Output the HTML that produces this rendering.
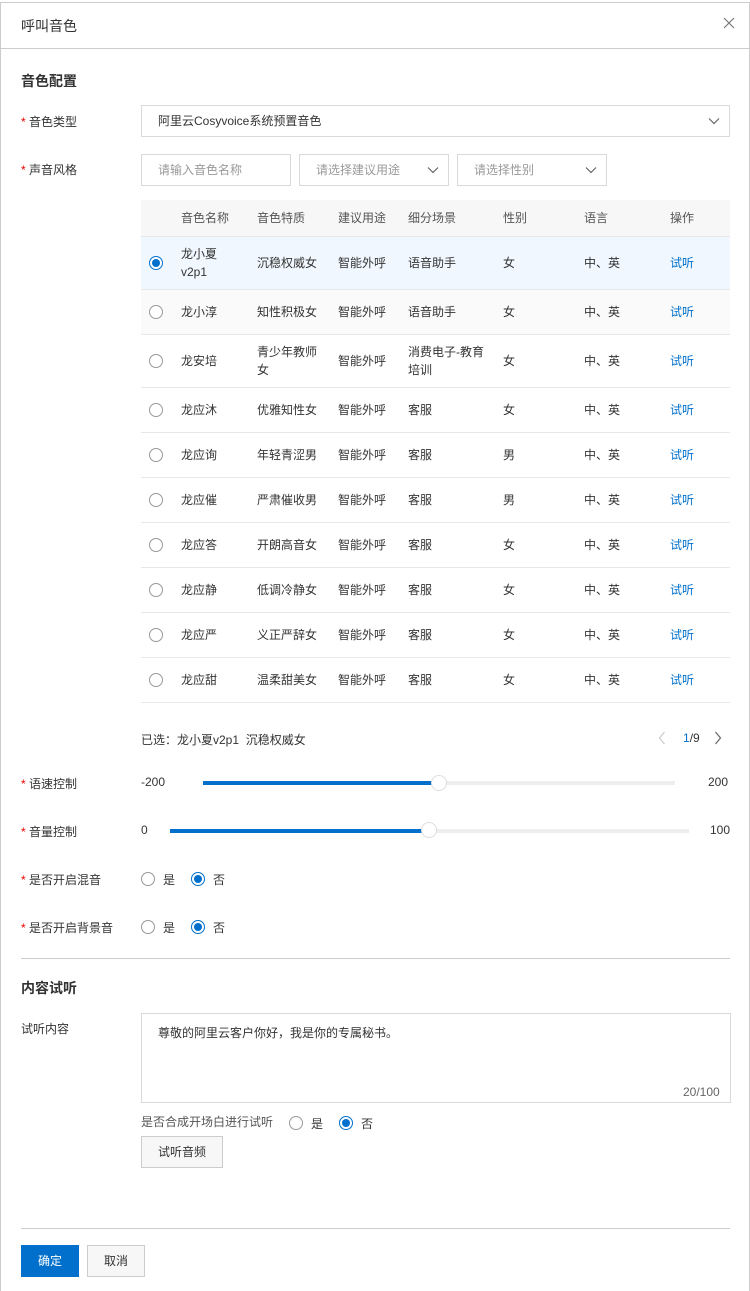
<!DOCTYPE html><html><head><meta charset="utf-8"><style>
*{box-sizing:border-box;margin:0;padding:0}
body{width:750px;height:1291px;background:#fff;font-family:"Liberation Sans","Noto Sans CJK SC",sans-serif;font-size:12px;color:#333;position:relative;overflow:hidden}
.a{position:absolute}
.frame{left:0;top:2px;width:750px;height:1289px;border:1px solid #ccc;border-bottom:none}
.star{color:#e00}
.inp{position:absolute;border:1px solid #d9d9d9;background:#fff;height:32px;line-height:30px;padding-left:16px;color:#333}
.ph{color:#999}
.chev{position:absolute;right:9px;top:9px}
.row{position:absolute;left:141px;width:589px;border-bottom:1px solid #e8e8e8}
.c{position:absolute;top:50%;transform:translateY(-50%);line-height:18px}
.rad{position:absolute;width:14px;height:14px;border:1px solid #999;border-radius:50%;background:#fff}
.rad.on{border-color:#0070cc}
.rad.on::after{content:"";position:absolute;left:2px;top:2px;width:8px;height:8px;border-radius:50%;background:#0070cc}
.link{color:#0070cc}
.hr{position:absolute;height:1px;background:#ccc}
.btn{position:absolute;height:32px;line-height:30px;text-align:center;border:1px solid #ccc;background:#f7f7f7}
</style></head><body>
<div class="a frame"></div>
<div class="a" style="left:21px;top:16px;font-size:14px;color:#333">呼叫音色</div>
<svg class="a" style="left:723px;top:17px" width="12" height="12" viewBox="0 0 12 12"><path d="M1 1L11 11M11 1L1 11" stroke="#777" stroke-width="1.2"/></svg>
<div class="hr" style="left:1px;width:748px;top:48px"></div>
<div class="a" style="left:21px;top:71px;font-size:14px;font-weight:bold">音色配置</div>
<div class="a" style="left:21px;top:113px"><span class="star">* </span>音色类型</div>
<div class="inp" style="left:141px;top:105px;width:589px">阿里云Cosyvoice系统预置音色<svg class="chev" width="12" height="12" viewBox="0 0 12 12"><path d="M1 3.5L6 8.5L11 3.5" fill="none" stroke="#666" stroke-width="1.2"/></svg></div>
<div class="a" style="left:21px;top:161px"><span class="star">* </span>声音风格</div>
<div class="inp ph" style="left:141px;top:154px;width:150px">请输入音色名称</div>
<div class="inp ph" style="left:299px;top:154px;width:150px">请选择建议用途<svg class="chev" width="12" height="12" viewBox="0 0 12 12"><path d="M1 3.5L6 8.5L11 3.5" fill="none" stroke="#666" stroke-width="1.2"/></svg></div>
<div class="inp ph" style="left:457px;top:154px;width:150px">请选择性别<svg class="chev" width="12" height="12" viewBox="0 0 12 12"><path d="M1 3.5L6 8.5L11 3.5" fill="none" stroke="#666" stroke-width="1.2"/></svg></div>

<div class="row" style="top:200px;height:37px;background:#f7f7f7;color:#555">
<span class="c" style="left:40px">音色名称</span><span class="c" style="left:116px">音色特质</span><span class="c" style="left:197px">建议用途</span><span class="c" style="left:267px">细分场景</span><span class="c" style="left:362px">性别</span><span class="c" style="left:443px">语言</span><span class="c" style="left:529px">操作</span></div>

<div class="row" style="top:237px;height:53px;background:#f0f7fe"><span class="rad on c" style="left:8px"></span><span class="c" style="left:40px">龙小夏<br>v2p1</span><span class="c" style="left:116px">沉稳权威女</span><span class="c" style="left:197px">智能外呼</span><span class="c" style="left:267px">语音助手</span><span class="c" style="left:362px">女</span><span class="c" style="left:443px">中、英</span><span class="c link" style="left:529px">试听</span></div>
<div class="row" style="top:290px;height:45px;background:#fafafa"><span class="rad c" style="left:8px"></span><span class="c" style="left:40px">龙小淳</span><span class="c" style="left:116px">知性积极女</span><span class="c" style="left:197px">智能外呼</span><span class="c" style="left:267px">语音助手</span><span class="c" style="left:362px">女</span><span class="c" style="left:443px">中、英</span><span class="c link" style="left:529px">试听</span></div>
<div class="row" style="top:335px;height:53px"><span class="rad c" style="left:8px"></span><span class="c" style="left:40px">龙安培</span><span class="c" style="left:116px">青少年教师<br>女</span><span class="c" style="left:197px">智能外呼</span><span class="c" style="left:267px">消费电子-教育<br>培训</span><span class="c" style="left:362px">女</span><span class="c" style="left:443px">中、英</span><span class="c link" style="left:529px">试听</span></div>
<div class="row" style="top:388px;height:45px"><span class="rad c" style="left:8px"></span><span class="c" style="left:40px">龙应沐</span><span class="c" style="left:116px">优雅知性女</span><span class="c" style="left:197px">智能外呼</span><span class="c" style="left:267px">客服</span><span class="c" style="left:362px">女</span><span class="c" style="left:443px">中、英</span><span class="c link" style="left:529px">试听</span></div>
<div class="row" style="top:433px;height:45px"><span class="rad c" style="left:8px"></span><span class="c" style="left:40px">龙应询</span><span class="c" style="left:116px">年轻青涩男</span><span class="c" style="left:197px">智能外呼</span><span class="c" style="left:267px">客服</span><span class="c" style="left:362px">男</span><span class="c" style="left:443px">中、英</span><span class="c link" style="left:529px">试听</span></div>
<div class="row" style="top:478px;height:45px"><span class="rad c" style="left:8px"></span><span class="c" style="left:40px">龙应催</span><span class="c" style="left:116px">严肃催收男</span><span class="c" style="left:197px">智能外呼</span><span class="c" style="left:267px">客服</span><span class="c" style="left:362px">男</span><span class="c" style="left:443px">中、英</span><span class="c link" style="left:529px">试听</span></div>
<div class="row" style="top:523px;height:45px"><span class="rad c" style="left:8px"></span><span class="c" style="left:40px">龙应答</span><span class="c" style="left:116px">开朗高音女</span><span class="c" style="left:197px">智能外呼</span><span class="c" style="left:267px">客服</span><span class="c" style="left:362px">女</span><span class="c" style="left:443px">中、英</span><span class="c link" style="left:529px">试听</span></div>
<div class="row" style="top:568px;height:45px"><span class="rad c" style="left:8px"></span><span class="c" style="left:40px">龙应静</span><span class="c" style="left:116px">低调冷静女</span><span class="c" style="left:197px">智能外呼</span><span class="c" style="left:267px">客服</span><span class="c" style="left:362px">女</span><span class="c" style="left:443px">中、英</span><span class="c link" style="left:529px">试听</span></div>
<div class="row" style="top:613px;height:45px"><span class="rad c" style="left:8px"></span><span class="c" style="left:40px">龙应严</span><span class="c" style="left:116px">义正严辞女</span><span class="c" style="left:197px">智能外呼</span><span class="c" style="left:267px">客服</span><span class="c" style="left:362px">女</span><span class="c" style="left:443px">中、英</span><span class="c link" style="left:529px">试听</span></div>
<div class="row" style="top:658px;height:45px"><span class="rad c" style="left:8px"></span><span class="c" style="left:40px">龙应甜</span><span class="c" style="left:116px">温柔甜美女</span><span class="c" style="left:197px">智能外呼</span><span class="c" style="left:267px">客服</span><span class="c" style="left:362px">女</span><span class="c" style="left:443px">中、英</span><span class="c link" style="left:529px">试听</span></div>

<div class="a" style="left:141px;top:731px">已选：龙小夏v2p1&nbsp; 沉稳权威女</div>
<svg class="a" style="left:658px;top:731px" width="8" height="14" viewBox="0 0 8 14"><path d="M6.5 1L1.5 7L6.5 13" fill="none" stroke="#ccc" stroke-width="1.2"/></svg>
<div class="a" style="left:683px;top:731px"><span class="link">1</span>/9</div>
<svg class="a" style="left:714px;top:731px" width="8" height="14" viewBox="0 0 8 14"><path d="M1.5 1L6.5 7L1.5 13" fill="none" stroke="#666" stroke-width="1.2"/></svg>

<div class="a" style="left:21px;top:775px"><span class="star">* </span>语速控制</div>
<div class="a" style="left:141px;top:775px">-200</div>
<div class="a" style="left:203px;top:781px;width:472px;height:4px;background:#eee"></div>
<div class="a" style="left:203px;top:781px;width:236px;height:4px;background:#0070cc"></div>
<div class="a" style="left:431px;top:775px;width:16px;height:16px;border-radius:50%;background:#fff;border:1px solid #ddd"></div>
<div class="a" style="left:708px;top:775px">200</div>

<div class="a" style="left:21px;top:823px"><span class="star">* </span>音量控制</div>
<div class="a" style="left:141px;top:823px">0</div>
<div class="a" style="left:170px;top:829px;width:519px;height:4px;background:#eee"></div>
<div class="a" style="left:170px;top:829px;width:259px;height:4px;background:#0070cc"></div>
<div class="a" style="left:421px;top:822px;width:16px;height:16px;border-radius:50%;background:#fff;border:1px solid #ddd"></div>
<div class="a" style="left:710px;top:823px">100</div>

<div class="a" style="left:21px;top:871px"><span class="star">* </span>是否开启混音</div>
<span class="rad" style="left:141px;top:872px"></span><div class="a" style="left:163px;top:871px">是</div>
<span class="rad on" style="left:191px;top:872px"></span><div class="a" style="left:213px;top:871px">否</div>
<div class="a" style="left:21px;top:919px"><span class="star">* </span>是否开启背景音</div>
<span class="rad" style="left:141px;top:920px"></span><div class="a" style="left:163px;top:919px">是</div>
<span class="rad on" style="left:191px;top:920px"></span><div class="a" style="left:213px;top:919px">否</div>

<div class="hr" style="left:21px;width:709px;top:958px"></div>
<div class="a" style="left:21px;top:978px;font-size:14px;font-weight:bold">内容试听</div>
<div class="a" style="left:21px;top:1020px">试听内容</div>
<div class="a" style="left:141px;top:1013px;width:590px;height:90px;border:1px solid #d9d9d9;padding:10px 16px">尊敬的阿里云客户你好，我是你的专属秘书。</div>
<div class="a" style="left:683px;top:1085px;color:#666">20/100</div>
<div class="a" style="left:141px;top:1113px;color:#555">是否合成开场白进行试听</div>
<span class="rad" style="left:289px;top:1116px"></span><div class="a" style="left:311px;top:1115px">是</div>
<span class="rad on" style="left:339px;top:1116px"></span><div class="a" style="left:361px;top:1115px">否</div>
<div class="btn" style="left:141px;top:1136px;width:82px">试听音频</div>
<div class="hr" style="left:21px;width:709px;top:1228px"></div>
<div class="btn" style="left:21px;top:1245px;width:58px;background:#0070cc;border-color:#0070cc;color:#fff">确定</div>
<div class="btn" style="left:87px;top:1245px;width:58px">取消</div>
</body></html>
